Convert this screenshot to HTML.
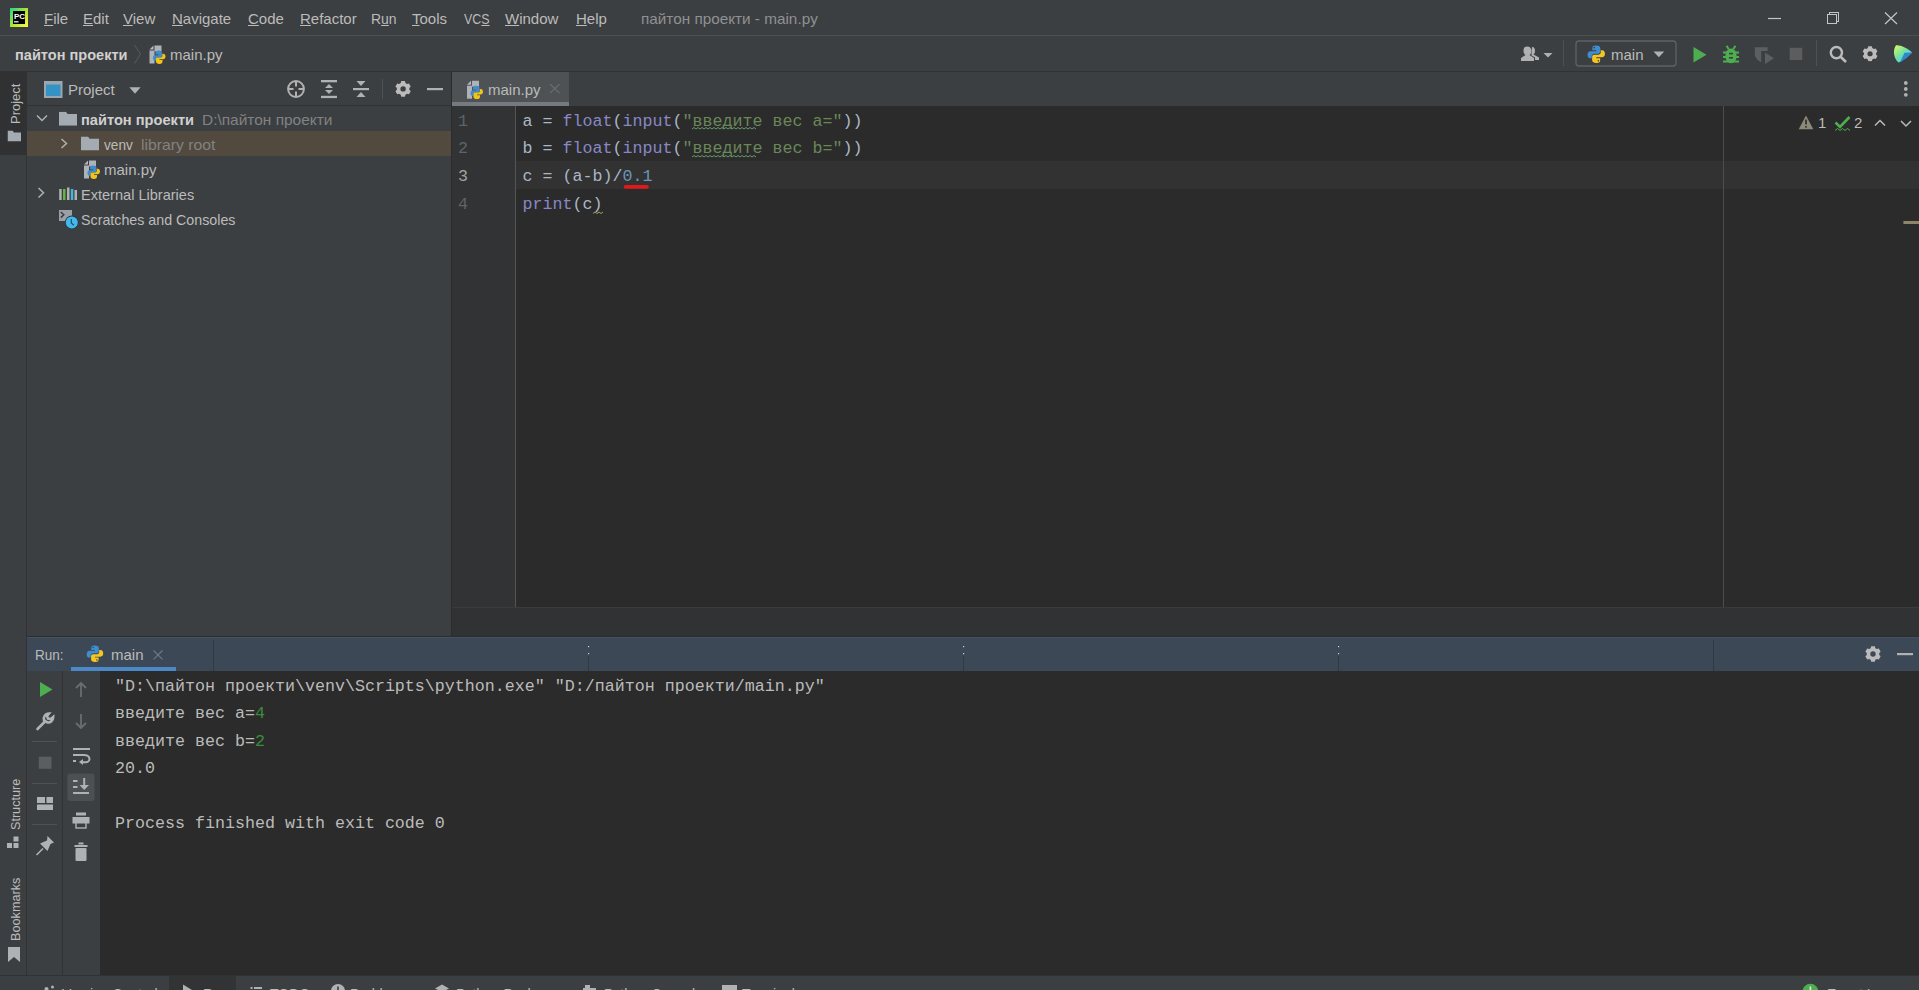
<!DOCTYPE html>
<html><head><meta charset="utf-8">
<style>
*{margin:0;padding:0;box-sizing:border-box}
html,body{width:1919px;height:990px;overflow:hidden;background:#3C3F41}
body{position:relative;font-family:"Liberation Sans",sans-serif;font-size:15px;color:#BBBBBB}
.a{position:absolute}
.t{position:absolute;white-space:pre;line-height:20px}
.mono{font-family:"Liberation Mono",monospace;font-size:16.67px;white-space:pre}
svg{position:absolute;overflow:visible}
u{text-decoration:underline;text-decoration-thickness:1px;text-underline-offset:0.5px}
.sx{transform-origin:0 0}
.vt{position:absolute;white-space:pre;line-height:20px;transform-origin:0 0;transform:rotate(-90deg)}
</style></head><body>

<!-- MENU BAR -->
<div class="a" style="left:0;top:0;width:1919px;height:35px;background:#3C3F41"></div>
<div class="a" style="left:0;top:35px;width:1919px;height:1px;background:#4D5052"></div>

<!-- BREADCRUMB BAR -->
<div class="a" style="left:0;top:36px;width:1919px;height:35px;background:#3C3F41"></div>
<div class="a" style="left:0;top:71px;width:1919px;height:1px;background:#323232"></div>

<!-- LEFT STRIPE -->
<div class="a" style="left:0;top:72px;width:26px;height:904px;background:#3C3F41"></div>
<div class="a" style="left:0;top:72px;width:26px;height:83px;background:#2F3133"></div>
<div class="a" style="left:26px;top:72px;width:1px;height:904px;background:#323232"></div>

<!-- PROJECT PANEL -->
<div class="a" style="left:27px;top:72px;width:424px;height:564px;background:#3C3F41"></div>
<div class="a" style="left:27px;top:105px;width:424px;height:1px;background:#323232"></div>
<div class="a" style="left:27px;top:131px;width:424px;height:25px;background:#524A3F"></div>
<div class="a" style="left:451px;top:72px;width:1px;height:565px;background:#2B2B2B"></div>

<!-- EDITOR -->
<div class="a" style="left:452px;top:72px;width:1467px;height:34px;background:#3C3F41"></div>
<div class="a" style="left:452px;top:72px;width:117px;height:34px;background:#4E5254"></div>
<div class="a" style="left:452px;top:102px;width:117px;height:4px;background:#747A80"></div>
<div class="a" style="left:452px;top:106px;width:1467px;height:501px;background:#2B2B2B"></div>
<div class="a" style="left:452px;top:106px;width:63px;height:501px;background:#313335"></div>
<div class="a" style="left:515px;top:161px;width:1404px;height:28px;background:#323232"></div>
<div class="a" style="left:515px;top:106px;width:1px;height:501px;background:#555555"></div>
<div class="a" style="left:1723px;top:106px;width:1px;height:501px;background:#4D4D4D"></div>
<div class="a" style="left:452px;top:607px;width:1467px;height:30px;background:#313233"></div>
<div class="a" style="left:452px;top:607px;width:1467px;height:1px;background:#3A3B3C"></div>
<div class="a" style="left:27px;top:636px;width:1892px;height:1px;background:#2B2F34"></div>

<!-- RUN PANEL -->
<div class="a" style="left:27px;top:637px;width:1892px;height:34px;background:#3D4856"></div>
<div class="a" style="left:27px;top:637px;width:1892px;height:1px;background:#47525F"></div>
<div class="a" style="left:71px;top:667px;width:105px;height:4px;background:#4A88C7"></div>
<div class="a" style="left:27px;top:671px;width:35px;height:305px;background:#3C3F41"></div>
<div class="a" style="left:62px;top:671px;width:1px;height:305px;background:#323232"></div>
<div class="a" style="left:63px;top:671px;width:37px;height:305px;background:#3C3F41"></div>
<div class="a" style="left:100px;top:671px;width:1819px;height:305px;background:#2B2B2B"></div>

<!-- STATUS BAR -->
<div class="a" style="left:0;top:975px;width:1919px;height:1px;background:#323232"></div>
<div class="a" style="left:0;top:976px;width:1919px;height:14px;background:#3C3F41"></div>

<!-- CONTENT -->
<div id="content">
<!-- menu texts -->
<div class="t" style="left:44px;top:9px"><u>F</u>ile</div>
<div class="t" style="left:83px;top:9px"><u>E</u>dit</div>
<div class="t" style="left:123px;top:9px"><u>V</u>iew</div>
<div class="t" style="left:172px;top:9px"><u>N</u>avigate</div>
<div class="t" style="left:248px;top:9px"><u>C</u>ode</div>
<div class="t" style="left:300px;top:9px"><u>R</u>efactor</div>
<div class="t sx" style="left:371px;top:9px;transform:scaleX(0.93)">R<u>u</u>n</div>
<div class="t" style="left:412px;top:9px"><u>T</u>ools</div>
<div class="t sx" style="left:464px;top:9px;transform:scaleX(0.83)">VC<u>S</u></div>
<div class="t" style="left:505px;top:9px"><u>W</u>indow</div>
<div class="t" style="left:576px;top:9px"><u>H</u>elp</div>
<div class="t sx" style="left:641px;top:9px;color:#8F9193;transform:scaleX(1.02)">пайтон проекти - main.py</div>

<!-- breadcrumb -->
<div class="t sx" style="left:15px;top:45px;font-weight:bold;color:#D0D0D0;transform:scaleX(0.97)">пайтон проекти</div>
<div class="t" style="left:170px;top:45px">main.py</div>

<!-- project header -->
<div class="t" style="left:68px;top:80px">Project</div>

<!-- tree -->
<div class="t sx" style="left:81px;top:110px;font-weight:bold;color:#D0D0D0;transform:scaleX(0.975)">пайтон проекти</div>
<div class="t sx" style="left:202px;top:110px;color:#828282;transform:scaleX(1.03)">D:\пайтон проекти</div>
<div class="t sx" style="left:104px;top:135px;transform:scaleX(0.91)">venv</div>
<div class="t sx" style="left:141px;top:135px;color:#828282;transform:scaleX(1.05)">library root</div>
<div class="t" style="left:104px;top:160px">main.py</div>
<div class="t sx" style="left:81px;top:185px;transform:scaleX(0.97)">External Libraries</div>
<div class="t sx" style="left:81px;top:210px;transform:scaleX(0.95)">Scratches and Consoles</div>

<!-- editor tab -->
<div class="t" style="left:488px;top:80px">main.py</div>

<!-- line numbers -->
<div class="a mono" style="left:458px;top:107.8px;line-height:27.6px;color:#606366">1
2
<span style="color:#A4A3A3">3</span>
4</div>

<!-- code -->
<div class="a mono" style="left:522.5px;top:107.8px;line-height:27.6px;color:#A9B7C6">a = <span style="color:#8888C6">float</span>(<span style="color:#8888C6">input</span>(<span style="color:#6A8759">"введите вес a="</span>))
b = <span style="color:#8888C6">float</span>(<span style="color:#8888C6">input</span>(<span style="color:#6A8759">"введите вес b="</span>))
c = (a-b)/<span style="color:#6897BB">0.1</span>
<span style="color:#8888C6">print</span>(c)</div>

<!-- indicators -->
<div class="t" style="left:1818px;top:113px;color:#BBBBBB">1</div>
<div class="t" style="left:1854px;top:113px;color:#BBBBBB">2</div>

<!-- run header -->
<div class="t sx" style="left:35px;top:645px;transform:scaleX(0.9)">Run:</div>
<div class="t" style="left:111px;top:645px">main</div>


<!-- combobox text -->
<div class="t" style="left:1611px;top:45px">main</div>
<!-- vertical labels -->
<div class="vt" style="left:6px;top:123.5px;font-size:13px">Project</div>
<div class="vt" style="left:6px;top:830px;font-size:13px;transform:rotate(-90deg) scaleX(0.97)">Structure</div>
<div class="vt" style="left:6px;top:941px;font-size:13px;transform:rotate(-90deg) scaleX(0.975)">Bookmarks</div>
<!-- status bar -->
<div class="a" style="left:169px;top:976px;width:67px;height:14px;background:#313335"></div>
<div class="t" style="left:62px;top:984px;font-size:14px">Version Control</div>
<div class="t" style="left:203px;top:984px;font-size:14px">Run</div>
<div class="t" style="left:270px;top:984px;font-size:14px">TODO</div>
<div class="t" style="left:350px;top:984px;font-size:14px">Problems</div>
<div class="t" style="left:456px;top:984px;font-size:14px">Python Packages</div>
<div class="t" style="left:604px;top:984px;font-size:14px">Python Console</div>
<div class="t" style="left:742px;top:984px;font-size:14px">Terminal</div>
<div class="t" style="left:1827px;top:984px;font-size:14px">Event Log</div>

<!-- console -->
<div class="a mono" style="left:115px;top:672.5px;line-height:27.5px;color:#BBBBBB">"D:\пайтон проекти\venv\Scripts\python.exe" "D:/пайтон проекти/main.py"
введите вес a=<span style="color:#3B8B3B">4</span>
введите вес b=<span style="color:#3B8B3B">2</span>
20.0

Process finished with exit code 0</div>
</div>

<svg class="a" style="left:0;top:0" width="1919" height="990" viewBox="0 0 1919 990">
<defs>
 <linearGradient id="pcg" x1="0" y1="0" x2="1" y2="1">
  <stop offset="0" stop-color="#21D789"/><stop offset="0.55" stop-color="#B6E62E"/><stop offset="1" stop-color="#FCF84A"/>
 </linearGradient>
 <linearGradient id="jbg" x1="0.1" y1="0" x2="0.9" y2="0.9">
  <stop offset="0" stop-color="#D8F86A"/><stop offset="0.5" stop-color="#6FDFA6"/><stop offset="0.8" stop-color="#4FD8E0"/><stop offset="1" stop-color="#2E86D8"/>
 </linearGradient>
 <symbol id="pyfile" viewBox="0 0 17 19">
  <path d="M0.5,4.5 L4.5,0.5 L4.5,4.5 Z" fill="#B7B3C8"/>
  <rect x="5.5" y="0.5" width="7" height="6" fill="#AEB3B8"/>
  <rect x="0.5" y="5.5" width="5" height="13" fill="#AEB3B8"/>
  <path d="M9.5,5.5 C7.3,5.5 6.5,6.5 6.5,8 L6.5,9.5 L9.5,9.5 L9.5,10.2 L5.8,10.2 C4.5,10.2 4,11.5 4,13 C4,14.6 4.8,15.8 5.8,15.8 L7,15.8 L7,13.9 C7,13 7.8,12.4 8.6,12.4 L11.6,12.4 C12.4,12.4 13,11.8 13,11 L13,8 C13,6.5 11.8,5.5 9.5,5.5 Z" fill="#3F8CCB"/>
  <path d="M10.5,19 C12.7,19 13.5,18 13.5,16.5 L13.5,15 L10.5,15 L10.5,14.3 L14.2,14.3 C15.5,14.3 16.5,13 16.5,11.5 C16.5,9.9 15.7,8.7 14.2,8.7 L13.3,8.7 L13.3,10.8 C13.3,11.7 12.5,12.4 11.6,12.4 L8.6,12.4 C7.8,12.4 7,13 7,13.8 L7,16.5 C7,18 8.2,19 10.5,19 Z" fill="#F2C418"/>
 </symbol>
 <symbol id="pylogo" viewBox="0 0 18 18">
  <path d="M8.8,0.5 C5.6,0.5 5.2,1.8 5.2,3.4 L5.2,5.2 L9,5.2 L9,6 L3.4,6 C1.6,6 0.5,7.3 0.5,9.4 C0.5,11.5 1.5,12.9 3.2,12.9 L4.6,12.9 L4.6,10.9 C4.6,9.5 5.8,8.4 7.2,8.4 L10.9,8.4 C12.1,8.4 13,7.5 13,6.3 L13,3.4 C13,1.8 11.8,0.5 8.8,0.5 Z" fill="#3E8DD0"/>
  <circle cx="7" cy="2.6" r="0.8" fill="#3C3F41"/>
  <path d="M9.2,17.5 C12.4,17.5 12.8,16.2 12.8,14.6 L12.8,12.8 L9,12.8 L9,12 L14.6,12 C16.4,12 17.5,10.7 17.5,8.6 C17.5,6.5 16.5,5.1 14.8,5.1 L13.4,5.1 L13.4,7.1 C13.4,8.5 12.2,9.6 10.8,9.6 L7.1,9.6 C5.9,9.6 5,10.5 5,11.7 L5,14.6 C5,16.2 6.2,17.5 9.2,17.5 Z" fill="#F3C623"/>
  <circle cx="11" cy="15.4" r="0.8" fill="#3C3F41"/>
 </symbol>
 <symbol id="folder" viewBox="0 0 18 14">
  <path d="M0,0 L7,0 L8.5,2.2 L18,2.2 L18,14 L0,14 Z" fill="#A4ABB2"/>
 </symbol>
 <symbol id="gear" viewBox="0 0 16 16">
  <path fill-rule="evenodd" d="M5.64,2.16 L6.20,0.21 L9.80,0.21 L10.36,2.16 L11.88,3.04 L13.85,2.54 L15.65,5.66 L14.24,7.12 L14.24,8.88 L15.65,10.34 L13.85,13.46 L11.88,12.96 L10.36,13.84 L9.80,15.79 L6.20,15.79 L5.64,13.84 L4.12,12.96 L2.15,13.46 L0.35,10.34 L1.76,8.88 L1.76,7.12 L0.35,5.66 L2.15,2.54 L4.12,3.04Z M10.70,8.00 A2.7,2.7 0 1,0 5.30,8.00 A2.7,2.7 0 1,0 10.70,8.00Z" fill="#BBBBBB"/>
 </symbol>
</defs>

<!-- PyCharm logo -->
<rect x="10" y="8" width="18" height="19" fill="url(#pcg)"/>
<rect x="13" y="11" width="12" height="13" fill="#000"/>
<text x="14" y="18.6" font-family="Liberation Sans" font-weight="bold" font-size="8" fill="#fff">PC</text>
<rect x="14" y="21.2" width="4.5" height="1.2" fill="#fff"/>

<!-- window controls -->
<line x1="1768" y1="18.5" x2="1781" y2="18.5" stroke="#C4C4C4" stroke-width="1.2"/>
<rect x="1829.5" y="12.5" width="9" height="9" fill="none" stroke="#C4C4C4" stroke-width="1"/>
<rect x="1827.5" y="14.5" width="9" height="9" fill="#3C3F41" stroke="#C4C4C4" stroke-width="1"/>
<path d="M1885,12.5 L1897,24 M1897,12.5 L1885,24" stroke="#C4C4C4" stroke-width="1.2"/>

<!-- breadcrumb -->
<polyline points="134.5,45 140.5,54 134.5,63.5" fill="none" stroke="#585B5E" stroke-width="1"/>
<use href="#pyfile" x="149" y="45" width="17" height="19"/>

<!-- toolbar right -->
<path d="M1527,46.5 C1524.5,46.5 1523.5,48.5 1523.5,51 C1523.5,53 1524.5,54.5 1525.5,55 L1521,58 L1521,61 L1534,61 L1534,58 L1529.5,55 C1530.5,54.5 1531.5,53 1531.5,51 C1531.5,48.5 1530,46.5 1527,46.5 Z" fill="#AFB1B3"/>
<path d="M1532,47 C1534.5,47 1535,49 1535,51 C1535,52.5 1534.5,53.5 1533.5,54.5 L1539,57.5 L1539,60 L1535,60 L1535,57.5 L1531.5,55.5 Z" fill="#AFB1B3"/>
<polygon points="1543.5,53 1552.5,53 1548,57.6" fill="#AFB1B3"/>
<line x1="1563.5" y1="40" x2="1563.5" y2="66" stroke="#4F5254" stroke-width="1"/>
<rect x="1576" y="41" width="100" height="25" rx="3" fill="none" stroke="#5E6165" stroke-width="1.3"/>
<use href="#pylogo" x="1587" y="45" width="18.5" height="18.5"/>
<polygon points="1653.5,51.5 1664.2,51.5 1658.85,57.2" fill="#AFB1B3"/>
<polygon points="1693.5,47 1706.5,54.7 1693.5,62.4" fill="#4DAE50"/>
<!-- bug -->
<g fill="#4DAE50">
 <ellipse cx="1731" cy="55.8" rx="5.6" ry="7.4"/>
 <rect x="1723" y="51.5" width="16" height="2"/>
 <rect x="1723" y="56" width="16" height="2"/>
 <rect x="1723" y="60.5" width="16" height="2"/>
 <path d="M1726.5,45.8 L1728.8,49.2 M1735.5,45.8 L1733.2,49.2" stroke="#4DAE50" stroke-width="2"/>
</g>
<rect x="1729" y="52.8" width="4" height="1.6" fill="#3C3F41"/>
<rect x="1729" y="57" width="4" height="1.6" fill="#3C3F41"/>
<!-- coverage -->
<path d="M1754.8,47.3 L1767.6,47.3 L1767.6,51 L1761.2,51 L1761.2,62.3 C1757.4,60.5 1754.8,57.5 1754.8,53.5 Z" fill="#5C5F61"/>
<polygon points="1765,52.5 1774,58.3 1765,64" fill="#5C5F61"/>
<rect x="1789.7" y="47.8" width="12.5" height="12.2" fill="#5B5D5F"/>
<line x1="1816.5" y1="40" x2="1816.5" y2="66" stroke="#4F5254" stroke-width="1"/>
<circle cx="1836.4" cy="52.6" r="5.6" fill="none" stroke="#BBBBBB" stroke-width="2.4"/>
<line x1="1840.6" y1="56.8" x2="1846" y2="62" stroke="#BBBBBB" stroke-width="2.6"/>
<use href="#gear" x="1862.3" y="46" width="15.5" height="15.5"/>
<path d="M1896,45.3 C1901,45 1908,48.5 1912,52.5 C1908,57 1902,61.5 1898.5,62.6 C1895.5,60 1894,56 1894,52.5 C1894,49.5 1894.8,47 1896,45.3 Z" fill="url(#jbg)"/>
<path d="M1904.5,52.8 L1912,52.5 C1908,57 1902,61.5 1900,62.3 Z" fill="#2A74D2" opacity="0.85"/>

<!-- project header -->
<rect x="44" y="81" width="18.5" height="17" fill="#9AA7B0"/>
<rect x="46" y="84.5" width="14.5" height="11.5" fill="#3592C4"/>
<polygon points="129.4,87.2 140.6,87.2 135,93.8" fill="#AFB1B3"/>
<circle cx="296" cy="89" r="7.9" fill="none" stroke="#AFB1B3" stroke-width="2"/>
<path d="M296,81 L296,86.5 M296,91.5 L296,97 M288,89 L293.5,89 M298.5,89 L304,89" stroke="#AFB1B3" stroke-width="2"/>
<g fill="#AFB1B3">
 <rect x="321" y="80" width="16" height="2.3"/>
 <rect x="321" y="95.8" width="16" height="2.3"/>
 <polygon points="325,88 333,88 329,84"/>
 <polygon points="325,90 333,90 329,94"/>
 <rect x="353" y="88" width="16" height="2.2"/>
 <polygon points="356.5,81 365.5,81 361,86"/>
 <polygon points="356.5,97 365.5,97 361,92"/>
</g>
<line x1="382.5" y1="79" x2="382.5" y2="99" stroke="#4F5254" stroke-width="1"/>
<use href="#gear" x="395.1" y="80.9" width="16" height="16"/>
<rect x="427" y="88" width="16" height="2.2" fill="#AFB1B3"/>

<!-- left stripe icons -->
<use href="#folder" x="7.5" y="130" width="13.5" height="12"/>
<g fill="#AFB1B3">
 <rect x="7" y="843" width="5" height="5"/><rect x="13.5" y="843" width="5" height="5"/><rect x="13.5" y="836.5" width="5" height="5"/>
</g>
<path d="M8,947 L20,947 L20,962 L14,957 L8,962 Z" fill="#AFB1B3"/>

<!-- tree -->
<polyline points="37,115.5 42,120.5 47,115.5" fill="none" stroke="#AFB1B3" stroke-width="1.5"/>
<use href="#folder" x="59" y="111.7" width="18" height="14"/>
<polyline points="61.5,139 66.5,143.5 61.5,148" fill="none" stroke="#AFB1B3" stroke-width="1.5"/>
<use href="#folder" x="81" y="136.5" width="18" height="14"/>
<use href="#pyfile" x="83.5" y="160" width="17" height="19"/>
<polyline points="38.5,188 43.5,192.8 38.5,197.5" fill="none" stroke="#AFB1B3" stroke-width="1.5"/>
<rect x="59.2" y="189" width="2.5" height="11" fill="#AFB1B3"/>
<rect x="63" y="189" width="2.5" height="11" fill="#62B543"/>
<rect x="67" y="187.5" width="2.5" height="12.5" fill="#AFB1B3"/>
<rect x="70.8" y="189" width="2.5" height="11" fill="#40B6E0"/>
<rect x="74.5" y="190" width="2.5" height="10" fill="#AFB1B3"/>
<rect x="59" y="210" width="13" height="11" fill="#9AA0A6"/>
<path d="M60.8,212 L63.8,214.8 L60.8,217.6" fill="none" stroke="#3C3F41" stroke-width="1.5"/>
<circle cx="71.8" cy="222.4" r="6.8" fill="#203A50"/>
<circle cx="71.8" cy="222.4" r="6" fill="#44B8E8"/>
<path d="M71.3,219 L71.3,223 L73.8,225.2" fill="none" stroke="#1E4C70" stroke-width="1.2"/>

<!-- editor tab -->
<use href="#pyfile" x="466.5" y="80.2" width="17" height="19"/>
<path d="M550,84.2 L559.5,93.1 M559.5,84.2 L550,93.1" stroke="#6E7072" stroke-width="1.1"/>
<circle cx="1905.8" cy="83" r="1.9" fill="#AFB1B3"/>
<circle cx="1905.8" cy="89" r="1.9" fill="#AFB1B3"/>
<circle cx="1905.8" cy="94.8" r="1.9" fill="#AFB1B3"/>

<!-- editor indicators -->
<polygon points="1806,115.5 1813.3,129.2 1798.7,129.2" fill="#8C8A78"/>
<rect x="1805.2" y="119.5" width="1.6" height="5" fill="#2B2B2B"/>
<rect x="1805.2" y="126" width="1.6" height="1.6" fill="#2B2B2B"/>
<polyline points="1835.5,122.5 1840,127 1849.5,117" fill="none" stroke="#4DAE50" stroke-width="2.6"/>
<polyline points="1835,130.5 1837.5,128.5 1840,130.5 1842.5,128.5 1845,130.5 1847.5,128.5 1850,130.5" fill="none" stroke="#4DAE50" stroke-width="1"/>
<polyline points="1875,125.5 1880,120.5 1885,125.5" fill="none" stroke="#BBBBBB" stroke-width="1.5"/>
<polyline points="1901,121 1906,126 1911,121" fill="none" stroke="#BBBBBB" stroke-width="1.5"/>
<rect x="1903.4" y="221" width="15.6" height="3" fill="#8E8466"/>

<!-- squiggles -->
<path id="sq1" d="M692,129 l2,-1.5 l2,1.5 l2,-1.5 l2,1.5 l2,-1.5 l2,1.5 l2,-1.5 l2,1.5 l2,-1.5 l2,1.5 l2,-1.5 l2,1.5 l2,-1.5 l2,1.5 l2,-1.5 l2,1.5 l2,-1.5 l2,1.5 l2,-1.5 l2,1.5 l2,-1.5 l2,1.5 l2,-1.5 l2,1.5 l2,-1.5 l2,1.5 l2,-1.5 l2,1.5 l2,-1.5 l2,1.5 l2,-1.5 l2,1.5" fill="none" stroke="#659C6B" stroke-width="1"/>
<path d="M692,157 l2,-1.5 l2,1.5 l2,-1.5 l2,1.5 l2,-1.5 l2,1.5 l2,-1.5 l2,1.5 l2,-1.5 l2,1.5 l2,-1.5 l2,1.5 l2,-1.5 l2,1.5 l2,-1.5 l2,1.5 l2,-1.5 l2,1.5 l2,-1.5 l2,1.5 l2,-1.5 l2,1.5 l2,-1.5 l2,1.5 l2,-1.5 l2,1.5 l2,-1.5 l2,1.5 l2,-1.5 l2,1.5 l2,-1.5 l2,1.5" fill="none" stroke="#659C6B" stroke-width="1"/>
<line x1="625.5" y1="186.9" x2="647" y2="186.9" stroke="#E01A1A" stroke-width="3.6" stroke-linecap="round"/>
<path d="M593,213.5 l2,-1.5 l2,1.5 l2,-1.5 l2,1.5 l2,-1.5" fill="none" stroke="#A0A060" stroke-width="1"/>

<!-- run header -->
<use href="#pylogo" x="85.2" y="645" width="19.5" height="17.5"/>
<path d="M153.5,650.5 L162.5,659.3 M162.5,650.5 L153.5,659.3" stroke="#6F7A85" stroke-width="1.1"/>
<g stroke="#2E3A45" stroke-width="1">
 <line x1="213.5" y1="640" x2="213.5" y2="671"/>
 <line x1="588.5" y1="656" x2="588.5" y2="671"/>
 <line x1="963.5" y1="656" x2="963.5" y2="671"/>
 <line x1="1338.5" y1="656" x2="1338.5" y2="671"/>
 <line x1="1713.5" y1="640" x2="1713.5" y2="671"/>
</g>

<g fill="#C8D0D8">
 <rect x="963" y="646" width="1.2" height="1.2"/><rect x="963" y="653" width="1.2" height="1.2"/>
 <rect x="588" y="646" width="1.2" height="1.2"/><rect x="588" y="653" width="1.2" height="1.2"/>
 <rect x="1338" y="646" width="1.2" height="1.2"/><rect x="1338" y="653" width="1.2" height="1.2"/>
</g>
<use href="#gear" x="1865" y="646" width="16" height="16"/>
<rect x="1897" y="653" width="16" height="2.2" fill="#AFB1B3"/>

<!-- run toolbar col 1 -->
<polygon points="40,682 52.5,689.5 40,697" fill="#4DAE50"/>
<path d="M37.5,729 L45.5,721 M44,720.5 C43,717.5 45,713.5 49,713.5 L47,716 L48,718.5 L50.8,719 L53.2,717 C53.2,721 50,723.5 46.5,722" fill="none" stroke="#AFB1B3" stroke-width="2.6" stroke-linecap="round"/>
<line x1="32" y1="741.5" x2="57" y2="741.5" stroke="#4F5254"/>
<rect x="38.8" y="756.7" width="12.7" height="12.1" fill="#5B5D5F"/>
<line x1="32" y1="783.5" x2="57" y2="783.5" stroke="#4F5254"/>
<g fill="#AFB1B3">
 <rect x="37" y="797" width="8" height="6"/><rect x="46.5" y="797" width="6.5" height="6"/><rect x="37" y="804.5" width="16" height="5.5"/>
</g>
<line x1="32" y1="824.5" x2="57" y2="824.5" stroke="#4F5254"/>
<path d="M36.5,855 L43,848.5" stroke="#AFB1B3" stroke-width="1.6"/>
<polygon points="47.5,836 54,842.5 50.5,844 47.5,851 40,843.5 47,840.5" fill="#AFB1B3"/>

<!-- run toolbar col 2 -->
<g stroke="#6A6D70" stroke-width="1.8" fill="none">
 <path d="M81,683 L81,697 M76,688 L81,683 L86,688"/>
 <path d="M81,714 L81,728 M76,723 L81,728 L86,723"/>
</g>
<g fill="#AFB1B3">
 <rect x="73" y="748" width="17" height="2"/>
 <rect x="73" y="754" width="9" height="2"/>
 <rect x="73" y="760" width="3" height="2"/>
</g>
<path d="M82,755 C88,754.5 89.5,757 89.5,759 C89.5,761.5 87,763 82,762" fill="none" stroke="#AFB1B3" stroke-width="2"/>
<polygon points="79,762 83,759 83,765" fill="#AFB1B3"/>
<rect x="67.3" y="773.6" width="27.2" height="27.3" rx="3" fill="#4C5052"/>
<g fill="#AFB1B3">
 <rect x="73" y="780" width="4.5" height="2"/>
 <rect x="73" y="786" width="4.5" height="2"/>
 <rect x="73" y="792" width="16" height="2"/>
 <rect x="83.2" y="778" width="2" height="10"/>
 <polygon points="79.5,785 89,785 84.2,790"/>
 <rect x="76" y="812.5" width="10" height="3"/>
 <rect x="72.5" y="817" width="17" height="6.5"/>
 <rect x="76" y="822" width="10" height="6" fill="none" stroke="#AFB1B3" stroke-width="1.4"/>
 <rect x="74.5" y="845" width="13" height="2"/>
 <rect x="78.5" y="842.5" width="5" height="2"/>
 <rect x="75.5" y="848" width="11" height="13" rx="1"/>
</g>

<!-- status bar icons -->
<g fill="#AFB1B3">
 <circle cx="46.5" cy="989" r="2"/><circle cx="52.5" cy="987" r="1.5"/>
 <polygon points="183,984.5 192,990 183,990"/>
 <rect x="250.5" y="987" width="2" height="2"/><rect x="254" y="987" width="8" height="2"/>
 <circle cx="338" cy="991" r="7"/>
 <polygon points="435,988.5 442,984.5 449,988.5 442,992"/>
 <rect x="585" y="985" width="5" height="3"/><rect x="583" y="988" width="13" height="3"/>
 <rect x="722" y="985" width="15" height="6"/>
</g>
<rect x="337.2" y="986.5" width="1.6" height="4" fill="#3C3F41"/>
<circle cx="1810.4" cy="991.8" r="8" fill="#4DAE50"/>
<rect x="1809.6" y="986.5" width="1.6" height="4" fill="#E0F0E0"/>
</svg>

</body></html>
